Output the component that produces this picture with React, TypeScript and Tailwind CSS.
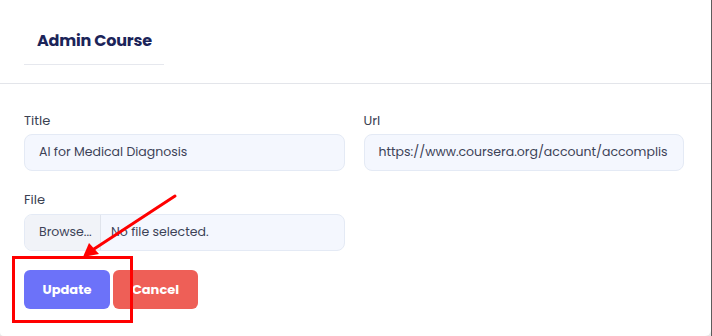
import React from "react";

export default function App() {
  return (
    <div className="relative w-[712px] h-[336px] bg-[#e9e9e9] overflow-hidden" style={{ fontFamily: "Poppins, 'Open Sans', sans-serif" }}>
      <div className="flex h-[336px]">
        <div className="flex-1 bg-white rounded-br-[6px] rounded-bl-[4px] h-[336px] flex flex-col">
          <div className="h-[84px] border-b border-[#e3e5ea] px-6 flex flex-col">
            <div className="w-[140px] h-[65px] border-b border-[#e6e8ee] flex items-center pl-[13px] pt-[18px]">
              <span className="text-[16px] font-bold text-[#1b2459] tracking-[-0.2px]">Admin Course</span>
            </div>
          </div>
          <div className="pl-6 pr-[27px] pt-[27px] grid grid-cols-2 gap-x-[19px]">
            <div className="flex flex-col">
              <label className="text-[13px] text-[#3b4252] leading-[20px] mb-[3px]">Title</label>
              <div className="h-[37px] rounded-[8px] bg-[#f4f7fe] border border-[#e4eaf5] flex items-center px-[14px] text-[12.5px] text-[#3c4257]">AI for Medical Diagnosis</div>
            </div>
            <div className="flex flex-col">
              <label className="text-[13px] text-[#3b4252] leading-[20px] mb-[3px]">Url</label>
              <div className="h-[37px] rounded-[8px] bg-[#f4f7fe] border border-[#e4eaf5] flex items-center px-[14px] text-[12.5px] text-[#3c4257] overflow-hidden whitespace-nowrap">https://www.coursera.org/account/accomplis</div>
            </div>
            <div className="flex flex-col mt-[19px]">
              <label className="text-[13px] text-[#3b4252] leading-[20px] mb-[4px]">File</label>
              <div className="h-[37px] rounded-[8px] bg-[#f4f7fe] border border-[#e4eaf5] flex items-center overflow-hidden text-[12.5px] text-[#3c4257]">
                <div className="h-full w-[76px] bg-[#f1f3f8] border-r border-[#e0e4ec] flex items-center pl-[14px] whitespace-nowrap">Browse...</div>
                <div className="pl-[10px] whitespace-nowrap">No file selected.</div>
              </div>
            </div>
            <div />
          </div>
          <div className="px-6 pt-[19px] flex gap-[3px]">
            <button className="w-[86px] h-[39px] rounded-[6px] bg-[#6c72f9] text-white text-[13px] font-bold">Update</button>
            <button className="w-[85px] h-[39px] rounded-[6px] bg-[#ee5f57] text-white text-[13px] font-bold">Cancel</button>
          </div>
        </div>
        <div className="w-px bg-[#5c5c5c]" />
      </div>
      <div className="absolute left-[12px] top-[256px] w-[121px] h-[67px] border-[3px] border-[#ff0000]" />
      <svg className="absolute left-0 top-0" width="712" height="336" viewBox="0 0 712 336">
        <line x1="175" y1="196" x2="94" y2="249" stroke="#ff0000" strokeWidth="3" strokeLinecap="round" />
        <polygon points="83,257 89,243 99,254" fill="#ff0000" />
      </svg>
    </div>
  );
}
